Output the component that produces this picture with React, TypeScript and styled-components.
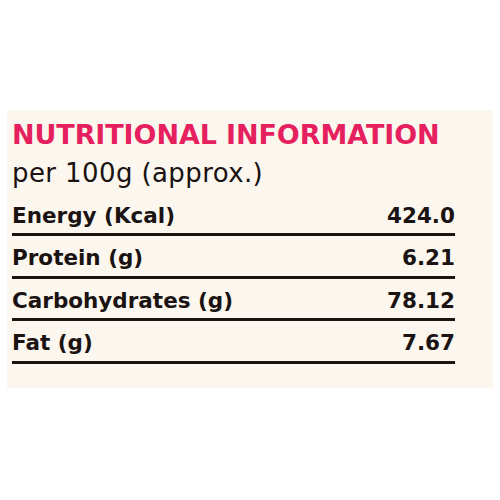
import { createGlobalStyle } from 'styled-components';
import styled from 'styled-components';

const rows = [
  { label: 'Energy (Kcal)', value: '424.0' },
  { label: 'Protein (g)', value: '6.21' },
  { label: 'Carbohydrates (g)', value: '78.12' },
  { label: 'Fat (g)', value: '7.67' },
];

const App = () => {
  return (
    <Page>
      <GlobalStyle />
      <Panel>
        <Title>NUTRITIONAL INFORMATION</Title>
        <Subtitle>per 100g (approx.)</Subtitle>
        <Table>
          {rows.map((row) => (
            <Row key={row.label}>
              <Label>{row.label}</Label>
              <Value>{row.value}</Value>
            </Row>
          ))}
        </Table>
      </Panel>
    </Page>
  );
};

export default App;

const GlobalStyle = createGlobalStyle`
  body {
    margin: 0;
    background: #ffffff;
    font-family: 'DejaVu Sans', 'Liberation Sans', sans-serif;
  }
`;

const Page = styled.div`
  width: 500px;
  height: 500px;
  padding: 110px 7px 0;
  box-sizing: border-box;
`;

const Panel = styled.div`
  width: 486px;
  height: 278px;
  background: #fbf7ee;
  padding: 8px 0 0 5px;
  box-sizing: border-box;
`;

const Title = styled.h1`
  margin: 0;
  color: #e61f5f;
  font-weight: 700;
  font-size: 27px;
  line-height: 34px;
  letter-spacing: -0.1px;
`;

const Subtitle = styled.p`
  margin: 4px 0 0;
  color: #1a1312;
  font-size: 26px;
  line-height: 34px;
  letter-spacing: 0.4px;
`;

const Table = styled.div`
  width: 443px;
  margin-top: 4px;
`;

const Row = styled.div`
  display: flex;
  justify-content: space-between;
  align-items: center;
  height: 39.5px;
  border-bottom: 3px solid #1a1312;
  &:first-child {
    height: 39px;
  }
`;

const Label = styled.span`
  color: #1a1312;
  font-weight: 700;
  font-size: 21.5px;
  padding-top: 4px;
`;

const Value = styled(Label)``;
